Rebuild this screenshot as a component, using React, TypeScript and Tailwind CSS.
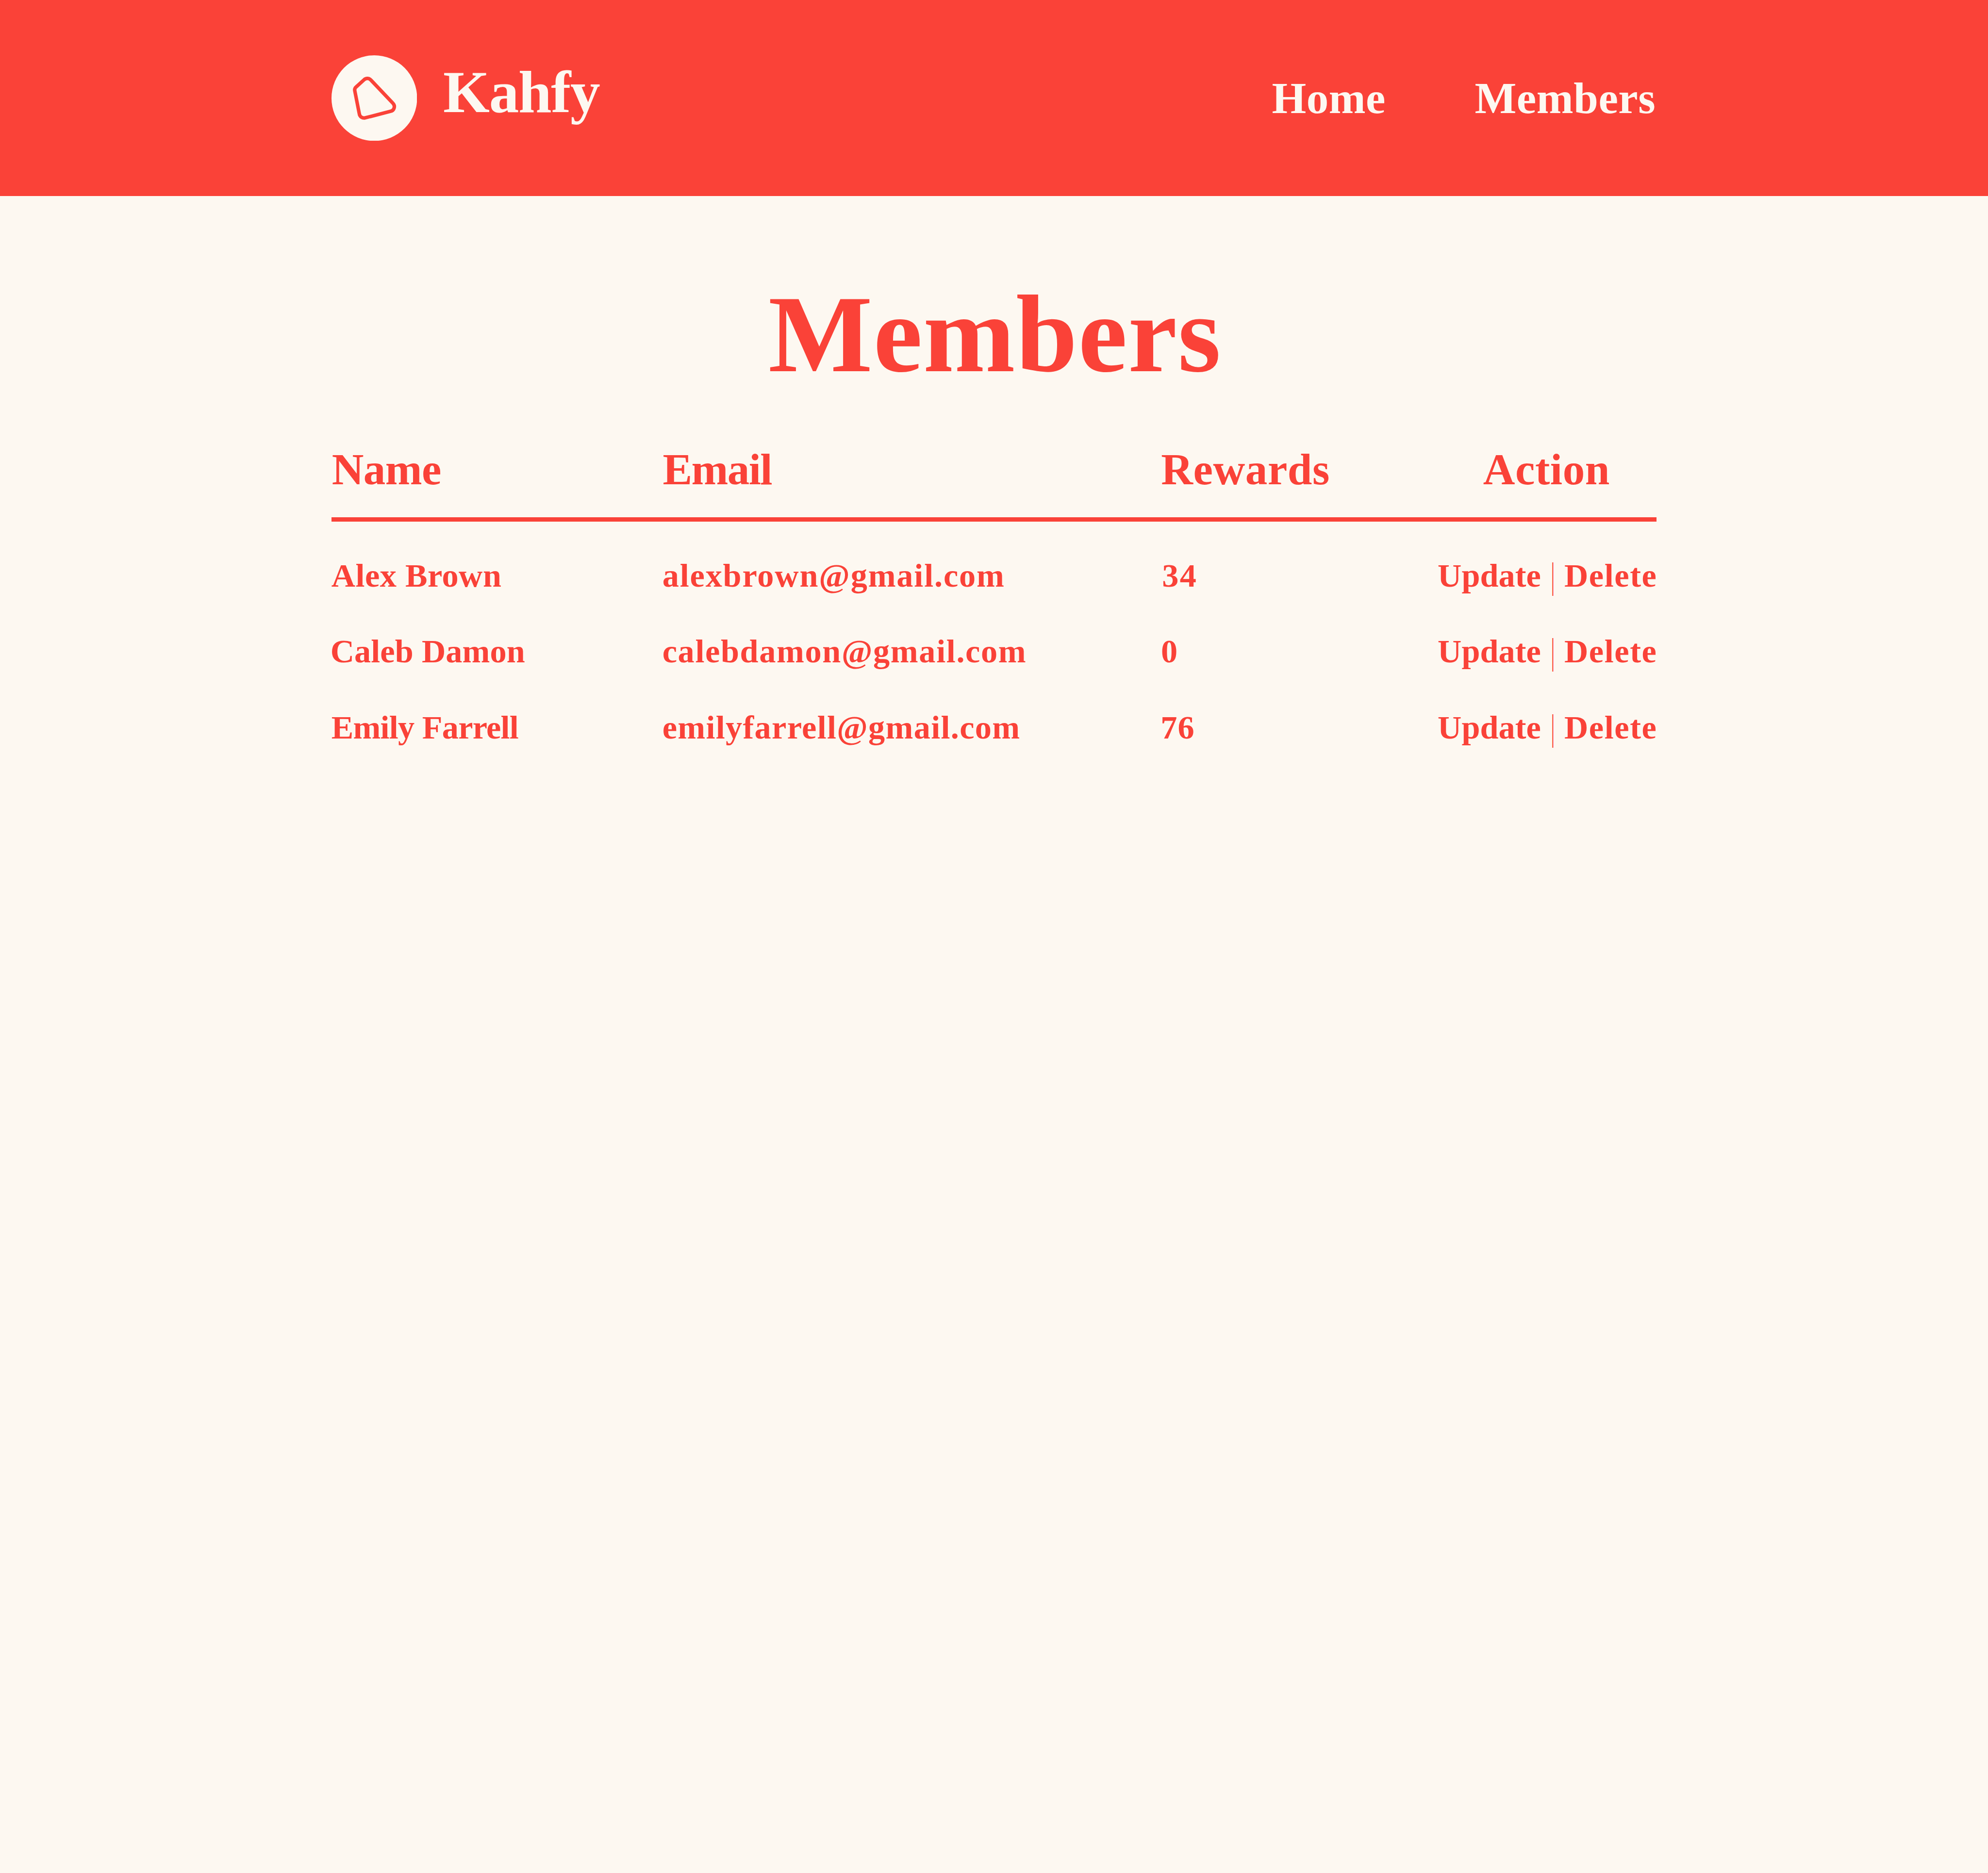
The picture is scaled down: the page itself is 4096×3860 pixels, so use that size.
function LogoMark() {
  return (
    <svg viewBox="31 28 560 560" className="size-[176.4px] shrink-0" aria-hidden="true">
      <circle cx="311" cy="308" r="280" fill="#fdf8f1" />
      <path
        d="M192 235 L244 188 A31 31 0 0 1 289 190 L432 341 A31 31 0 0 1 418 394 L252 437 A31 31 0 0 1 213 411 L183 258 A25 25 0 0 1 192 235 Z"
        fill="none"
        stroke="#fa4238"
        strokeWidth="23"
        strokeLinejoin="round"
      />
    </svg>
  );
}

const members = [
  {
    name: "Alex Brown",
    nameClass: "tracking-[0.5px]",
    email: "alexbrown@gmail.com",
    emailClass: "tracking-[1.86px]",
    rewards: "34",
    rewardsClass: "ml-[3.3px] tracking-[2.29px]",
  },
  {
    name: "Caleb Damon",
    nameClass: "-ml-[2px] tracking-[0.09px]",
    email: "calebdamon@gmail.com",
    emailClass: "tracking-[1.66px]",
    rewards: "0",
    rewardsClass: "ml-[1px]",
  },
  {
    name: "Emily Farrell",
    nameClass: "tracking-[-0.73px]",
    email: "emilyfarrell@gmail.com",
    emailClass: "tracking-[1.33px]",
    rewards: "76",
    rewardsClass: "ml-[0.2px] tracking-[1.2px]",
  },
];

function Header() {
  return (
    <header className="h-[404px] bg-[#fa4238] text-[#fdf8f1]">
      <div className="mx-auto flex h-full w-2/3 items-center justify-between">
        <a className="flex items-center">
          <LogoMark />
          <span className="mb-[23px] ml-[54px] text-[123.4px] leading-[124px] tracking-[-1.38px]">Kahfy</span>
        </a>
        <nav className="flex items-center gap-[183.5px] pt-[2px] pr-[2px] text-[91px] leading-[92px]">
          <a className="tracking-[0.45px]">Home</a>
          <a className="tracking-[0.58px]">Members</a>
        </nav>
      </div>
    </header>
  );
}

export default function App() {
  return (
    <div className="min-h-[3860px] w-full bg-[#fdf8f1] font-['Liberation_Serif',serif] font-bold text-[#fa4238]">
      <Header />
      <main className="mx-auto w-2/3 pt-[170.4px]">
        <h1 className="pl-[4px] text-center text-[227.56px] leading-[228px] tracking-[1.65px]">Members</h1>

        <div className="mt-[115.3px] grid h-[157.5px] grid-cols-[682px_1026.3px_571.1px_1fr] border-b-[9px] border-[#fa4238] text-[91px] leading-[100px]">
          <span className="ml-[1px] tracking-[-0.58px]">Name</span>
          <span className="ml-[0.8px] tracking-[-1.61px]">Email</span>
          <span className="ml-[1.2px] tracking-[0.6px]">Rewards</span>
          <span className="ml-[93.6px] tracking-[0.6px]">Action</span>
        </div>

        <div className="mt-[32.5px] text-[68.27px] leading-[156.45px]">
          {members.map((m) => (
            <div key={m.email} className="grid grid-cols-[682px_1026.3px_571.1px_1fr] whitespace-nowrap">
              <span className={m.nameClass}>{m.name}</span>
              <span className={m.emailClass}>{m.email}</span>
              <span className={m.rewardsClass}>{m.rewards}</span>
              <span className="flex">
                <a className="tracking-[0.07px]">Update</a>
                <span className="mr-[16.3px] ml-[16.8px] block h-[154px] scale-x-[0.42] scale-y-[1.12]">|</span>
                <a className="tracking-[1.6px]">Delete</a>
              </span>
            </div>
          ))}
        </div>
      </main>
    </div>
  );
}
